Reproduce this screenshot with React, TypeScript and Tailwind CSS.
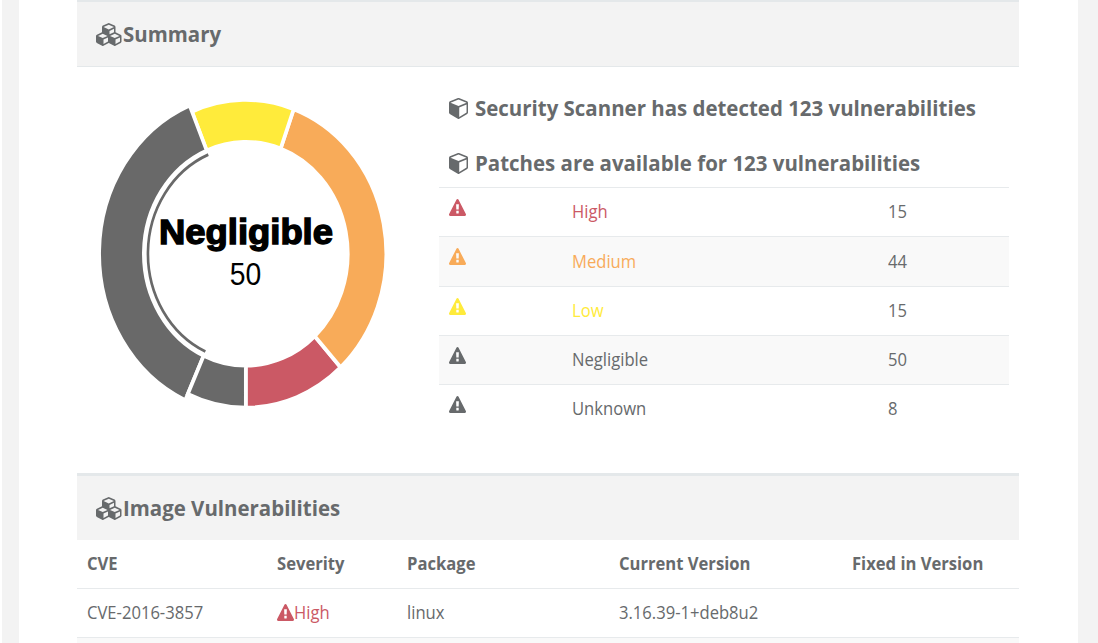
import type { ReactNode } from "react";

const CUBES =
  "M640 1632l384-192v-314l-384 164v342zm-64-454l404-173-404-173-404 173zm1088 454l384-192v-314l-384 164v342zm-64-454l404-173-404-173-404 173zm-448-293l384-165v-266l-384 164v267zm-64-379l441-189-441-189-441 189zm1088 518v416q0 36-19 67t-52 47l-448 224q-25 14-57 14t-57-14l-448-224q-5-2-7-4-2 2-7 4l-448 224q-25 14-57 14t-57-14l-448-224q-33-16-52-47t-19-67v-416q0-38 21.5-70t56.5-48l434-186v-400q0-38 21.5-70t56.5-48l448-192q23-10 50-10t50 10l448 192q35 16 56.5 48t21.5 70v400l434 186q36 16 57 48t21 70z";
const CUBE =
  "M896 1629l640-349v-636l-640 233v752zm-64-865l698-254-698-254-698 254zm832-252v768q0 35-18 65t-49 47l-704 384q-28 16-61 16t-61-16l-704-384q-31-17-49-47t-18-65v-768q0-40 23-73t61-47l704-256q22-8 44-8t44 8l704 256q38 14 61 47t23 73z";
const WARNING =
  "M1024 1375v-190q0-14-9.5-23.5t-22.5-9.5h-192q-13 0-22.5 9.5t-9.5 23.5v190q0 14 9.5 23.5t22.5 9.5h192q13 0 22.5-9.5t9.5-23.5zm-2-374l18-459q0-12-10-19-13-11-24-11h-220q-11 0-24 11-10 7-10 21l17 457q0 10 10 16.5t24 6.5h185q14 0 23.5-6.5t10.5-16.5zm-14-934l768 1408q35 63-2 126-17 29-46.5 46t-63.5 17h-1536q-34 0-63.5-17t-46.5-46q-37-63-2-126l768-1408q17-31 47-49t65-18 65 18 47 49z";

function Icon({ d, box, className }: { d: string; box: string; className: string }) {
  return (
    <svg viewBox={box} preserveAspectRatio="none" fill="currentColor" className={className}>
      <path d={d} />
    </svg>
  );
}

function Text({ children }: { children: ReactNode }) {
  return (
    <span className="mb-[2px] inline-block origin-left scale-x-[0.922] whitespace-nowrap text-[18px] leading-6">
      {children}
    </span>
  );
}

function HeaderCell({ children }: { children: ReactNode }) {
  return (
    <span className="mb-[2px] inline-block origin-left scale-x-[0.922] whitespace-nowrap text-[18px] font-bold leading-6">
      {children}
    </span>
  );
}

function Heading({ children }: { children: ReactNode }) {
  return (
    <span className="mb-[2px] inline-block origin-left scale-x-[0.929] whitespace-nowrap text-[22px] font-bold leading-7">
      {children}
    </span>
  );
}

function PanelTitle({ children, className }: { children: ReactNode; className: string }) {
  return (
    <div className={`flex items-center border-[#e4e8ea] bg-[#f3f3f3] pl-[19px] ${className}`}>
      <Icon d={CUBES} box="0 0 2304 1792" className="mt-px h-[23px] w-[27px] shrink-0" />
      <Heading>{children}</Heading>
    </div>
  );
}

const slices = [
  { name: "High", value: 15, color: "#cb5965" },
  { name: "Medium", value: 44, color: "#f8ab59" },
  { name: "Low", value: 15, color: "#ffeb3b" },
  { name: "Negligible", value: 50, color: "#696969" },
  { name: "Unknown", value: 8, color: "#696969" },
];

const MIN_ANGLE = 3.7;

function point(r: number, deg: number) {
  const a = (deg * Math.PI) / 180;
  return `${(r * Math.sin(a)).toFixed(2)} ${(r * Math.cos(a)).toFixed(2)}`;
}

function Donut() {
  const total = slices.reduce((sum, s) => sum + s.value, 0);
  let angle = 0;
  const arcs = slices.map((s) => {
    const from = angle;
    angle += (s.value / total) * (360 - MIN_ANGLE * slices.length) + MIN_ANGLE;
    return { ...s, from, to: angle };
  });
  return (
    <svg viewBox="0 0 300 320" className="h-[320px] w-[300px]">
      <g transform="translate(149.8 159.8) scale(0.912 1)">
        {arcs.map((s) => {
          const outer = s.name === "Negligible" ? 160.8 : 154;
          const inner = 111.8;
          const large = s.to - s.from > 180 ? 1 : 0;
          return (
            <path
              key={s.name}
              fill={s.color}
              stroke="#fff"
              strokeWidth="4"
              d={`M${point(outer, s.from)}A${outer} ${outer} 0 ${large} 0 ${point(outer, s.to)}L${point(inner, s.to)}A${inner} ${inner} 0 ${large} 1 ${point(inner, s.from)}Z`}
            />
          );
        })}
        <path
          fill="none"
          stroke="#696969"
          strokeWidth="2.9"
          d={`M${point(107.3, arcs[3].from)}A107.3 107.3 0 0 0 ${point(107.3, arcs[3].to)}`}
        />
      </g>
      <g textAnchor="middle" fontFamily="Liberation Sans, Arial, sans-serif" fill="#000">
        <text x="150" y="150" fontSize="34.5" fontWeight="700" textLength="174" lengthAdjust="spacingAndGlyphs" stroke="#000" strokeWidth="1.4">
          Negligible
        </text>
        <text x="149.5" y="191" fontSize="31" textLength="31.5" lengthAdjust="spacingAndGlyphs">
          50
        </text>
      </g>
    </svg>
  );
}

const counts = [
  { name: "High", value: 15, row: "h-[49px]", tone: "text-[#cb5965]" },
  { name: "Medium", value: 44, row: "h-[50px] bg-[#f9f9f9]", tone: "text-[#f8ab59]" },
  { name: "Low", value: 15, row: "h-[49px]", tone: "text-[#ffeb3b]" },
  { name: "Negligible", value: 50, row: "h-[49px] bg-[#f9f9f9]", tone: "" },
  { name: "Unknown", value: 8, row: "h-[49px]", tone: "" },
];

const columns = "grid grid-cols-[190px_130px_212px_233px_1fr] pl-[10px]";

export default function App() {
  return (
    <div className="flex h-[643px] w-[1098px] overflow-hidden bg-white font-['Open_Sans',sans-serif] text-[#676a6c]">
      <div className="ml-[2px] w-[17px] shrink-0 bg-[#f3f3f3]" />
      <main className="w-[1059px] shrink-0 pl-[58px] pr-[59px]">
        <PanelTitle className="h-[67px] border-b border-t-2">Summary</PanelTitle>
        <section className="flex h-[406px]">
          <div className="w-[362px] shrink-0 pl-[19px] pt-[26.5px]">
            <Donut />
          </div>
          <div className="w-[570px] shrink-0">
            <h3 className="mt-[27px] flex h-7 items-center pl-[10px]">
              <Icon d={CUBE} box="0 128 1664 1664" className="mr-[7px] mt-px h-[21px] w-[19px] shrink-0" />
              <Heading>Security Scanner has detected 123 vulnerabilities</Heading>
            </h3>
            <h3 className="mt-[27px] flex h-7 items-center pl-[10px]">
              <Icon d={CUBE} box="0 128 1664 1664" className="mr-[7px] mt-px h-[21px] w-[19px] shrink-0" />
              <Heading>Patches are available for 123 vulnerabilities</Heading>
            </h3>
            <div className="mt-[10px]">
              {counts.map((c) => (
                <div
                  key={c.name}
                  className={`grid grid-cols-[123px_316px_1fr] items-center border-t border-[#e7eaec] pl-[10px] ${c.row}`}
                >
                  <Icon d={WARNING} box="0 0 1792 1664" className={`mb-[9.5px] h-[17px] w-[17px] ${c.tone}`} />
                  <div className={`flex ${c.tone}`}>
                    <Text>{c.name}</Text>
                  </div>
                  <Text>{c.value}</Text>
                </div>
              ))}
            </div>
          </div>
        </section>
        <PanelTitle className="h-[67px] border-t-[3px]">Image Vulnerabilities</PanelTitle>
        <div className={`${columns} h-[48px] items-center`}>
          <HeaderCell>CVE</HeaderCell>
          <HeaderCell>Severity</HeaderCell>
          <HeaderCell>Package</HeaderCell>
          <HeaderCell>Current Version</HeaderCell>
          <HeaderCell>Fixed in Version</HeaderCell>
        </div>
        <div className={`${columns} h-[49px] items-center border-t border-[#e7eaec]`}>
          <Text>CVE-2016-3857</Text>
          <div className="flex items-center text-[#cb5965]">
            <Icon d={WARNING} box="0 0 1792 1664" className="mb-[2px] h-[17px] w-[17px] shrink-0" />
            <Text>High</Text>
          </div>
          <Text>linux</Text>
          <Text>3.16.39-1+deb8u2</Text>
        </div>
        <div className="h-[6px] border-t border-[#e7eaec] bg-[#f9f9f9]" />
      </main>
      <div className="w-[20px] shrink-0 bg-[#f3f3f3]" />
    </div>
  );
}
